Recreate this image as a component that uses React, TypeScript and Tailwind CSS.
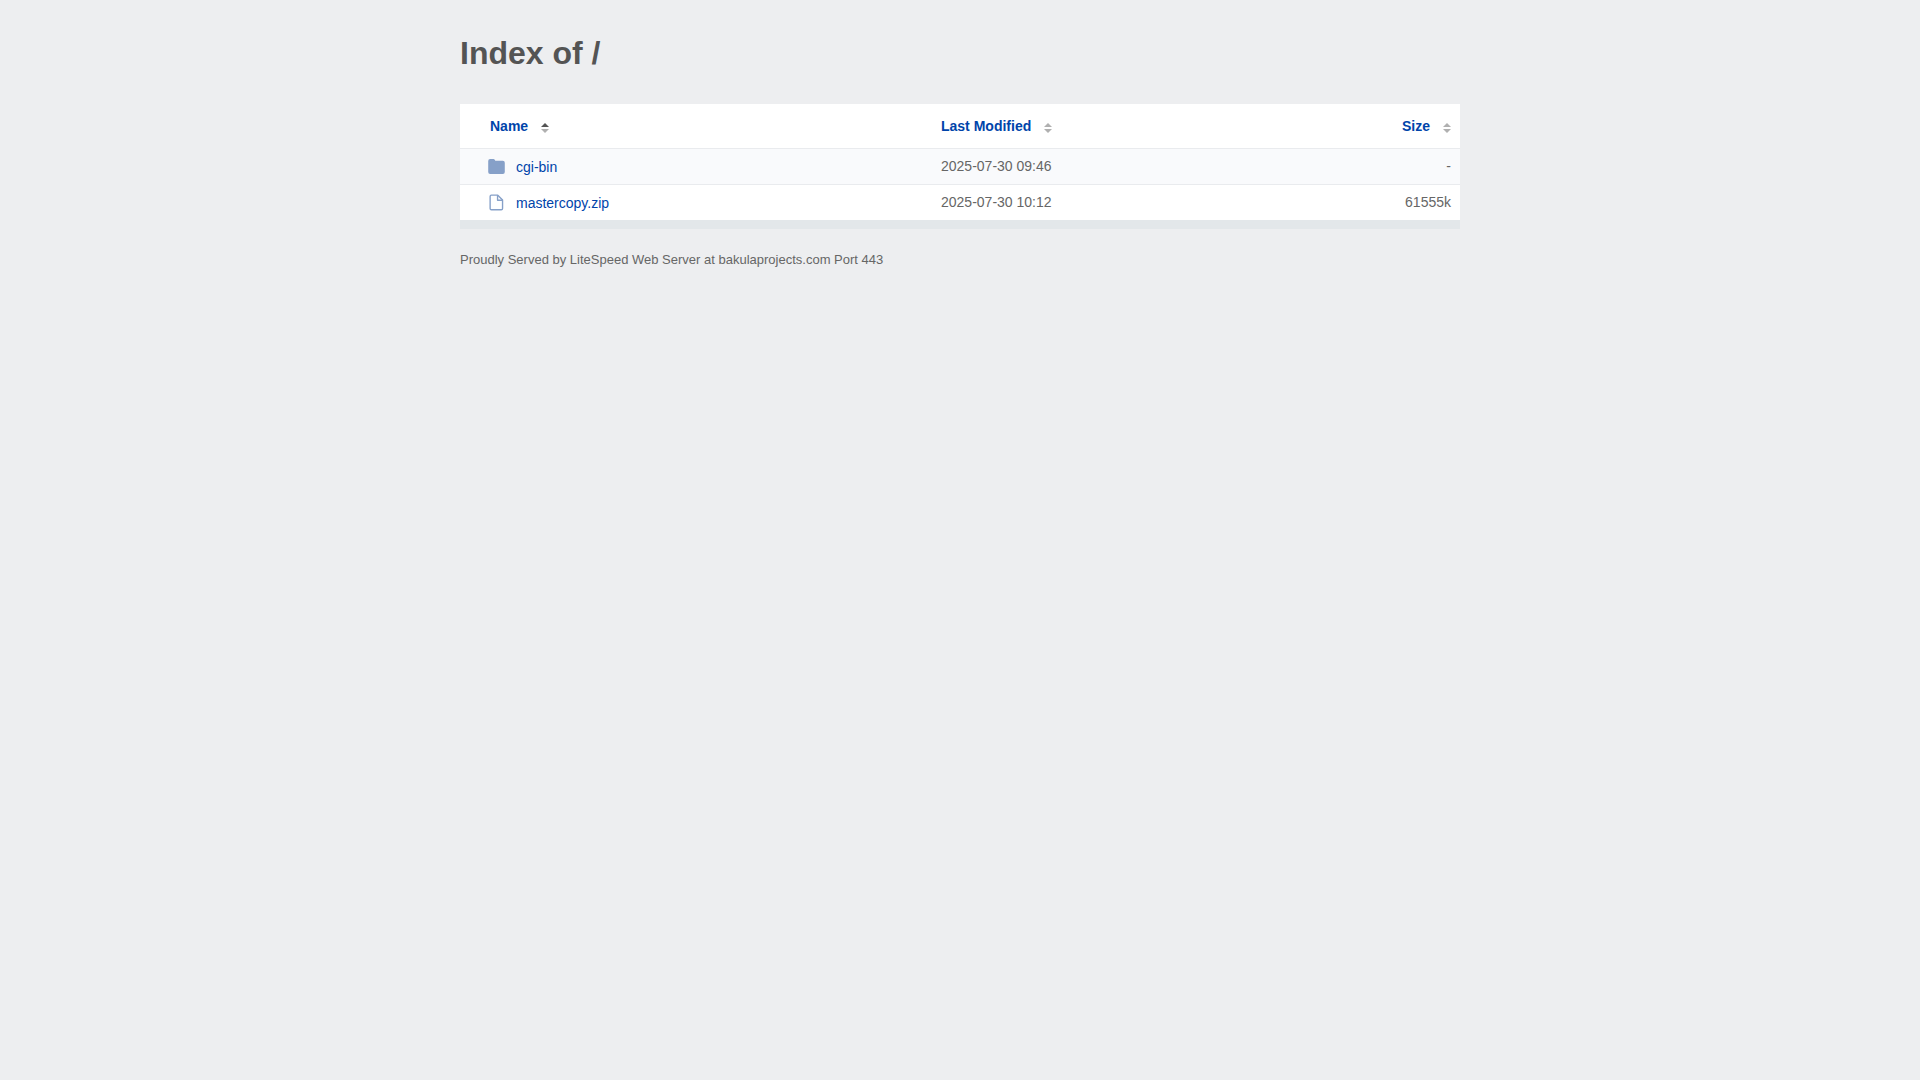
import React, { useState } from "react";

type SortKey = "name" | "modified" | "size";

const files = [
  { name: "cgi-bin", folder: true, modified: "2025-07-30 09:46", size: 0 },
  { name: "mastercopy.zip", folder: false, modified: "2025-07-30 10:12", size: 61555 }
];

const columns: { key: SortKey; label: string; className: string }[] = [
  { key: "name", label: "Name", className: "w-[47%] pl-[30px] text-left" },
  { key: "modified", label: "Last Modified", className: "pl-[11px] text-left" },
  { key: "size", label: "Size", className: "pr-[9px] text-right" }
];

function SortArrows({ direction }: { direction: "up" | "down" | null }) {
  return (
    <svg viewBox="0 0 8 10" className="mt-1 h-[10px] w-[8px]" aria-hidden="true">
      <path d="M4 0L8 4H0z" fill={direction === "up" ? "#545454" : "#b0b0b0"} />
      <path d="M4 10L0 6H8z" fill={direction === "down" ? "#545454" : "#b0b0b0"} />
    </svg>
  );
}

function FolderIcon() {
  return (
    <svg viewBox="0 0 16 16" className="size-[17px]" aria-hidden="true">
      <path d="M2 1h3.2c.5 0 .9.2 1.1.6l.6 1H14a1.8 1.8 0 0 1 1.8 1.8v8.8A1.8 1.8 0 0 1 14 15H2a1.8 1.8 0 0 1-1.8-1.8V2.8A1.8 1.8 0 0 1 2 1z" fill="#86a0c8" />
    </svg>
  );
}

function FileIcon() {
  return (
    <svg viewBox="0 0 16 16" className="size-[17px]" fill="none" stroke="#86a0c8" strokeWidth="1.3" strokeLinejoin="round" aria-hidden="true">
      <path d="M3.2 1.1h6l4.5 4.5v8a1.2 1.2 0 0 1-1.2 1.2H3.2A1.2 1.2 0 0 1 2 13.6V2.3a1.2 1.2 0 0 1 1.2-1.2z" />
      <path d="M9 1.2v4.7h4.6" />
    </svg>
  );
}

export default function App() {
  const [sortKey, setSortKey] = useState<SortKey>("name");
  const [ascending, setAscending] = useState(true);

  const sorted = [...files].sort((a, b) => {
    const order = a[sortKey] < b[sortKey] ? -1 : 1;
    return ascending ? order : -order;
  });

  const handleSort = (key: SortKey) => {
    setAscending(key === sortKey ? !ascending : true);
    setSortKey(key);
  };

  return (
    <div className="min-h-screen bg-[#edeef0] px-5 pt-[33px] font-['Liberation_Sans',Arial,sans-serif] text-sm text-[#545454]">
      <main className="mx-auto max-w-[1000px]">
        <h1 className="mb-[31px] text-[32px] leading-10 font-bold">Index of /</h1>

        <div className="border-b-[9px] border-[#e3e7ea] bg-white">
          <table className="w-full border-separate border-spacing-0">
            <thead>
              <tr className="h-[45px]">
                {columns.map((col) => (
                  <th key={col.key} className={`border-b border-[#e9ebee] pb-0.5 ${col.className}`}>
                    <button
                      onClick={() => handleSort(col.key)}
                      className="inline-flex cursor-pointer items-center gap-[13px] align-middle font-bold text-[#0044aa]"
                    >
                      {col.label}
                      <SortArrows direction={col.key !== sortKey ? null : ascending ? "up" : "down"} />
                    </button>
                  </th>
                ))}
              </tr>
            </thead>
            <tbody className="[&>tr:not(:last-child)>td]:border-b [&>tr>td]:border-[#e9ebee]">
              {sorted.map((file) => (
                <tr key={file.name} className="h-9 odd:bg-[#f9fafc] last:h-[35px]">
                  <td className="pb-px pl-7">
                    <a href={`/${file.name}`} className="inline-flex items-center gap-[11px] align-middle text-[#0044aa] hover:underline">
                      {file.folder ? <FolderIcon /> : <FileIcon />}
                      {file.name}
                    </a>
                  </td>
                  <td className="pb-0.5 pl-[11px] text-[#666666]">{file.modified}</td>
                  <td className="pr-[9px] pb-0.5 text-right text-[#666666]">{file.folder ? "-" : `${file.size}k`}</td>
                </tr>
              ))}
            </tbody>
          </table>
        </div>

        <footer className="mt-[21px] text-[13px] leading-5 text-[#666666]">
          Proudly Served by LiteSpeed Web Server at bakulaprojects.com Port 443
        </footer>
      </main>
    </div>
  );
}
